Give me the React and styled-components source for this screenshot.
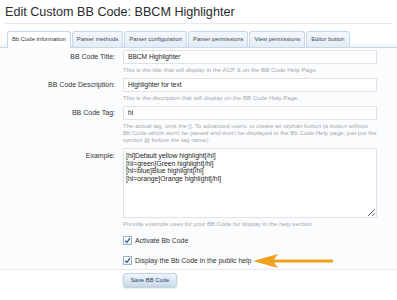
import React from "react";
import styled, { createGlobalStyle } from "styled-components";

const Global = createGlobalStyle`
  body {
    margin: 0;
    background: #fff;
    font-family: "Liberation Sans", Arial, sans-serif;
    color: #333;
  }
`;

const Page = styled.div`
  width: 397px;
  height: 300px;
  position: relative;
  overflow: hidden;
`;

const Title = styled.h1`
  margin: 0 5px;
  padding: 4px 0 3px;
  font-size: 12.6px;
  font-weight: normal;
  color: #2b2b2b;
  line-height: 16px;
  border-bottom: 1px solid #e7ebef;
`;

const Tabs = styled.ul`
  list-style: none;
  display: flex;
  margin: 7px 0 0;
  padding: 0 0 0 7px;
  border-bottom: 1px solid #c6d8e8;
  background: linear-gradient(to bottom, #fff 70%, #eef4fa);
`;

const Tab = styled.li`
  line-height: 15px;
  padding: 0 4px;
  margin-right: 1px;
  font-size: 5.9px;
  color: ${(p) => (p.$active ? "#333" : "#3d4a57")};
  border: 1px solid #c6d8e8;
  border-bottom: none;
  border-radius: 3px 3px 0 0;
  background: ${(p) =>
    p.$active ? "#fff" : "linear-gradient(to bottom, #f3f7fb, #e3ecf5)"};
  margin-bottom: ${(p) => (p.$active ? "-1px" : "0")};
  height: ${(p) => (p.$active ? "16px" : "15px")};
`;

const Form = styled.div`
  background: #fbfcfd;
  padding: 2px 0 4px;
  border-bottom: 1px solid #e6ebf0;
`;

const Row = styled.div`
  display: grid;
  grid-template-columns: 110px 254px;
  column-gap: 8px;
  margin-left: 5px;
  margin-bottom: ${(p) => p.$gap ?? 5}px;
`;

const Label = styled.div`
  text-align: right;
  font-size: 7px;
  line-height: 14px;
  color: #333;
  padding-top: ${(p) => p.$top || 0}px;
`;

const Field = styled.div`
  display: flex;
  flex-direction: column;
`;

const Input = styled.div`
  height: 12px;
  line-height: 12px;
  border: 1px solid #dfe3e8;
  background: #fff;
  padding: 0 4px;
  font-size: 6.6px;
  color: #222;
`;

const Area = styled.textarea`
  box-sizing: border-box;
  height: 70px;
  width: 254px;
  margin: 0;
  border: 1px solid #dfe3e8;
  background: #fff;
  padding: 3px 2px;
  font-family: "Liberation Sans", Arial, sans-serif;
  font-size: 6.8px;
  line-height: 7.7px;
  color: #222;
  resize: vertical;
  outline: none;
`;

const Help = styled.div`
  margin-top: 2px;
  font-size: 6.1px;
  line-height: 7px;
  color: #a5a9ad;
  white-space: nowrap;
`;

const Check = styled.label`
  display: flex;
  align-items: center;
  gap: 3px;
  height: 10px;
  font-size: 6.9px;
  color: #333;
  margin-top: ${(p) => p.$top || 0}px;
`;

const Box = styled.span`
  width: 7px;
  height: 7px;
  border: 1px solid #9eb3c6;
  background: linear-gradient(#fff, #e8eef4);
  display: flex;
  align-items: center;
  justify-content: center;
`;

const Actions = styled.div`
  padding: 3px 0 0 123px;
`;

const Button = styled.div`
  width: 52px;
  height: 12px;
  line-height: 12px;
  text-align: center;
  font-size: 5.9px;
  color: #2c4457;
  border: 1px solid #c3d5e5;
  border-radius: 3px;
  background: linear-gradient(to bottom, #eef4fa, #c9dcee);
  box-shadow: 0 1px 2px rgba(60, 80, 100, 0.35);
`;

const Arrow = styled.svg`
  position: absolute;
  left: 251px;
  top: 253px;
`;

const Tick = () => (
  <svg width="7" height="7" viewBox="0 0 7 7">
    <path d="M1.2 3.6 L2.9 5.4 L6 1.2" fill="none" stroke="#2f4f6a" strokeWidth="1.1" />
  </svg>
);

const tabs = [
  "Bb Code information",
  "Parser methods",
  "Parser configuration",
  "Parser permissions",
  "View permissions",
  "Editor button",
];

export default function App() {
  return (
    <Page>
      <Global />
      <Title>Edit Custom BB Code: BBCM Highlighter</Title>
      <Tabs>
        {tabs.map((t, i) => (
          <Tab key={t} $active={i === 0}>
            {t}
          </Tab>
        ))}
      </Tabs>
      <Form>
        <Row>
          <Label>BB Code Title:</Label>
          <Field>
            <Input>BBCM Highlighter</Input>
            <Help>This is the title that will display in the ACP &amp; on the BB Code Help Page.</Help>
          </Field>
        </Row>
        <Row>
          <Label>BB Code Description:</Label>
          <Field>
            <Input>Highlighter for text</Input>
            <Help>This is the discription that will display on the BB Code Help Page.</Help>
          </Field>
        </Row>
        <Row>
          <Label>BB Code Tag:</Label>
          <Field>
            <Input>hl</Input>
            <Help>
              The actual tag, omit the []. To advanced users: to create an orphan button (a button without
              <br />
              Bb Code which won't be parsed and won't be displayed in the Bb Code Help page, just put the
              <br />
              symbol @ before the tag name)
            </Help>
          </Field>
        </Row>
        <Row $gap={0}>
          <Label $top={1}>Example:</Label>
          <Field>
            <Area
              readOnly
              defaultValue={
                "[hl]Default yellow highlight[/hl]\n[hl=green]Green highlight[/hl]\n[hl=blue]Blue highlight[/hl]\n[hl=orange]Orange highlight[/hl]"
              }
            />
            <Help>Provide example uses for your BB Code for display in the help section.</Help>
            <Check $top={8}>
              <Box>
                <Tick />
              </Box>
              Activate Bb Code
            </Check>
            <Check $top={10}>
              <Box>
                <Tick />
              </Box>
              Display the Bb Code in the public help
            </Check>
          </Field>
        </Row>
      </Form>
      <Actions>
        <Button>Save BB Code</Button>
      </Actions>
      <Arrow width="84" height="16" viewBox="0 0 84 16">
        <path d="M2 8 L27 1 L23 6.6 L82 6.6 L82 9.4 L23 9.4 L27 15 Z" fill="#eea21f" />
      </Arrow>
    </Page>
  );
}
